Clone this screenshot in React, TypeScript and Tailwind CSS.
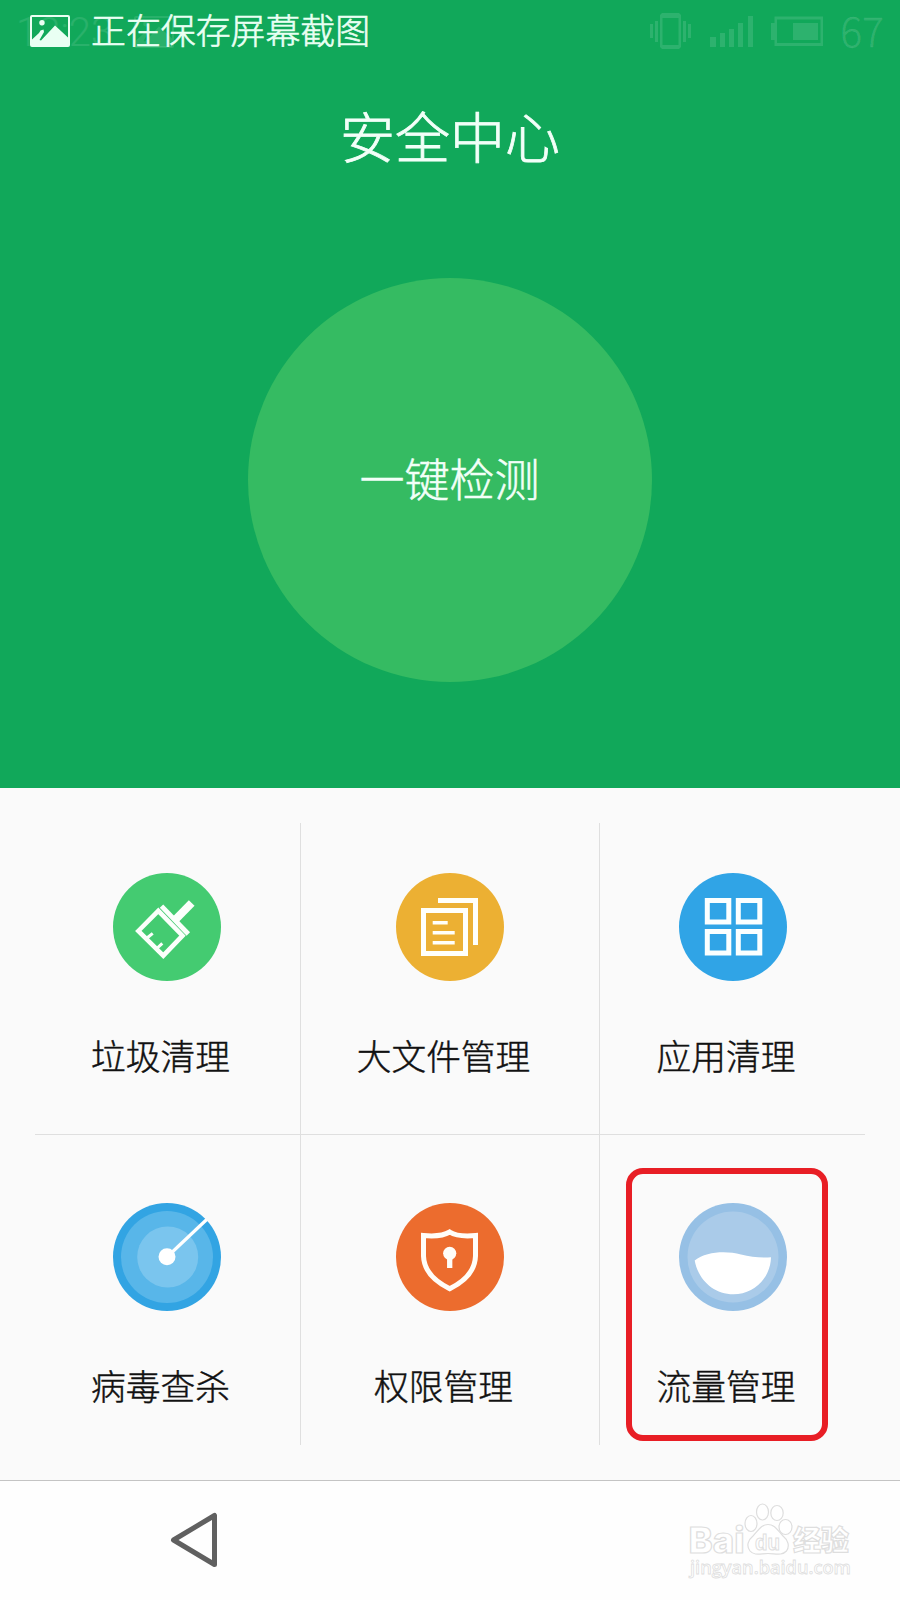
import React from 'react';

interface Tool {
  id: string;
  label: string;
  icon: React.ReactNode;
  highlighted?: boolean;
}

const BroomIcon = () => (
  <svg viewBox="0 0 108 108" className="w-[108px] h-[108px]">
    <circle cx="54" cy="54" r="54" fill="#44cb71" />
    <g fill="none" stroke="#fbfffb">
      <path d="M25.3 58 L45.3 37.8 L69.5 62.7 L50.3 82.7 Z" strokeWidth="4.6" />
      <path d="M48.5 33.2 L75.3 61" strokeWidth="4.8" />
      <path d="M62 47 L78.7 30" strokeWidth="8" />
      <path d="M34 65 L39.7 60.3 M44.3 75 L49.3 70.3" strokeWidth="3" />
    </g>
  </svg>
);

const FilesIcon = () => (
  <svg viewBox="0 0 108 108" className="w-[108px] h-[108px]">
    <circle cx="54" cy="54" r="54" fill="#ecb033" />
    <g fill="none" stroke="#fffffa">
      <rect x="27.5" y="37.5" width="42" height="43" strokeWidth="5" />
      <path d="M42 27.5 H79.5 V72" strokeWidth="5" />
      <path d="M36.7 49.7 H51.7 M36.7 59.7 H58.7 M36.7 69.7 H58.7" strokeWidth="3.4" />
    </g>
  </svg>
);

const AppsIcon = () => (
  <svg viewBox="0 0 108 108" className="w-[108px] h-[108px]">
    <circle cx="54" cy="54" r="54" fill="#30a4e6" />
    <g fill="none" stroke="#fbffff" strokeWidth="5">
      <rect x="28.3" y="27.5" width="21.5" height="21.5" />
      <rect x="59.3" y="27.5" width="21.5" height="21.5" />
      <rect x="28.3" y="58.5" width="21.5" height="21.5" />
      <rect x="59.3" y="58.5" width="21.5" height="21.5" />
    </g>
  </svg>
);

const RadarIcon = () => (
  <svg viewBox="0 0 108 108" className="w-[108px] h-[108px]">
    <circle cx="54" cy="54" r="54" fill="#32a4e3" />
    <circle cx="54" cy="54" r="46" fill="#58b6e9" />
    <circle cx="54.7" cy="54" r="30.5" fill="#7ac5ee" />
    <path d="M54 54 L93.7 16.5" stroke="#fff" strokeWidth="3.2" />
    <circle cx="54" cy="53.7" r="8.5" fill="#fff" />
  </svg>
);

const ShieldIcon = () => (
  <svg viewBox="0 0 108 108" className="w-[108px] h-[108px]">
    <circle cx="54" cy="54" r="54" fill="#ec6c2e" />
    <path
      d="M53.7 29 C47 33 38 33.5 27.5 32.5 V53 C28 69 39 78.5 53.7 85.7 C68.5 78.5 79 69 79.5 53 V32.5 C69 33.5 60 33 53.7 29 Z"
      fill="none"
      stroke="#fffdf8"
      strokeWidth="5"
    />
    <circle cx="53.7" cy="50.3" r="6.6" fill="#fffdf8" />
    <path d="M53.7 50 V65" stroke="#fffdf8" strokeWidth="5.3" />
  </svg>
);

const TrafficIcon = () => (
  <svg viewBox="0 0 108 108" className="w-[108px] h-[108px]">
    <circle cx="54" cy="54" r="54" fill="#96c0e5" />
    <circle cx="54" cy="54" r="45.5" fill="#aacbe9" />
    <path d="M15.7 57.5 C27 48.5 47 47.5 62 51.5 C72 54 82 55 92 54.3 C91.5 75 75 91.3 54.5 91.3 C34 91.3 19 76 15.7 57.5 Z" fill="#fff" />
  </svg>
);

const TOOLS: Tool[] = [
  { id: 'junk', label: '垃圾清理', icon: <BroomIcon /> },
  { id: 'files', label: '大文件管理', icon: <FilesIcon /> },
  { id: 'apps', label: '应用清理', icon: <AppsIcon /> },
  { id: 'virus', label: '病毒查杀', icon: <RadarIcon /> },
  { id: 'permissions', label: '权限管理', icon: <ShieldIcon /> },
  { id: 'traffic', label: '流量管理', icon: <TrafficIcon />, highlighted: true },
];

const PictureIcon = () => (
  <svg viewBox="0 0 40 32" className="w-10 h-8">
    <rect x="1" y="1" width="38" height="30" rx="1" fill="none" stroke="currentColor" strokeWidth="2" />
    <circle cx="12" cy="7.7" r="2.7" fill="currentColor" />
    <path d="M2 24.500 L9 18 L10.500 15.500 L13.500 14.500 L14 17 L9.500 25 L11 25.500 L25 10.500 L38 22.500 V31 H2 Z" fill="currentColor" />
  </svg>
);

const StatusBar = () => (
  <div className="relative flex h-[62px] justify-between text-[#e9fff3]">
    {/* Clock fading out behind the notification ticker */}
    <div className="absolute left-[16px] top-[9px] flex text-[40px] leading-[48px] font-light text-white/10 font-[Roboto,sans-serif]">
      12:23
      <span className="ml-[21px] mt-[7px]"><PictureIcon /></span>
    </div>
    <div className="relative flex items-start pl-[30px]">
      <span className="mt-[15px]"><PictureIcon /></span>
      <span className="ml-[21px] mt-[4px] text-[34.9px] leading-[50px] [-webkit-text-stroke:0.6px]">正在保存屏幕截图</span>
    </div>
    <div className="flex items-start pr-[16px] text-white/12">
      <svg viewBox="0 0 174 36" className="mt-[13px] w-[174px] h-[36px]" fill="currentColor">
        <path fillRule="evenodd" d="M12 0 H29 L31 2 V34 L29 36 H12 L10 34 V2 Z M12.5 5 V32 H28.5 V5 Z" />
        <path d="M5 8 H8 V29 H5 Z M0 11 H3 V25 H0 Z M33 8 H36 V29 H33 Z M38 11 H41 V25 H38 Z" />
        <path d="M60 24 H66 V34 H60 Z M70 20 H75 V34 H70 Z M79 16 H84 V34 H79 Z M88 10 H93 V34 H88 Z M98 3 H103 V34 H98 Z" />
        <path fillRule="evenodd" d="M124.500 3.500 H173 V33 H124.500 V27 H121 V10 H124.500 Z M127 6.500 V30 H170.500 V6.500 Z" />
        <path d="M143 10 H168 V27 H143 Z" />
      </svg>
      <span className="ml-[16px] mt-[4px] text-[41px] leading-[50px] font-[Noto_Sans_CJK_SC,sans-serif] [-webkit-text-stroke:0.3px]">67</span>
    </div>
  </div>
);

const ToolCell: React.FC<{ tool: Tool; index: number }> = ({ tool, index }) => (
  <div
    className={`relative flex flex-col items-center border-[#dfdfdf] ${
      index < 3 ? 'border-b pt-[50px]' : 'pt-[68px]'
    } ${index % 3 < 2 ? 'border-r' : ''} ${index % 3 === 0 ? 'pr-px' : ''}`}
  >
    {tool.icon}
    <span className="mt-[49px] mr-[13px] whitespace-nowrap text-[34.7px] leading-[50px] text-[#111] [-webkit-text-stroke:0.45px]">
      {tool.label}
    </span>
    {tool.highlighted && (
      <div className="absolute left-[26px] top-[33px] h-[273px] w-[202px] rounded-[17px] border-[6px] border-[#e81e25]" />
    )}
  </div>
);

const Watermark = () => (
  <svg viewBox="0 0 170 90" className="w-[170px] h-[90px]" fill="#fff" stroke="#dedede" strokeWidth="1.2">
    <g className="font-[Inter,sans-serif] font-extrabold">
      <text x="4.500" y="58" fontSize="36" textLength="56" lengthAdjust="spacingAndGlyphs">Bai</text>
    </g>
    <ellipse cx="67" cy="28.500" rx="6" ry="8" />
    <ellipse cx="78.500" cy="17" rx="6" ry="8" />
    <ellipse cx="93" cy="18" rx="6.200" ry="7.500" />
    <ellipse cx="101.500" cy="32" rx="6.500" ry="7.500" />
    <path d="M84 29.500 C77 29.500 74 36 69 41 C64 45 62 51 66 56 C70 61 77 58.500 84 58.500 C91 58.500 98 61 102.500 56 C106 51 104 45 99 41 C94 36 91 29.500 84 29.500 Z" />
    <g className="font-[Liberation_Sans,sans-serif] font-bold">
      <text x="71" y="54.500" fontSize="22" strokeWidth="1" textLength="25" lengthAdjust="spacingAndGlyphs">du</text>
    </g>
    <g className="font-[Noto_Sans_CJK_SC,sans-serif] font-black">
      <text x="109" y="56" fontSize="28" textLength="56" lengthAdjust="spacingAndGlyphs">经验</text>
    </g>
    <g className="font-[Open_Sans,sans-serif] font-semibold">
      <text x="6" y="79" fontSize="18" strokeWidth=".8" textLength="161" lengthAdjust="spacingAndGlyphs">jingyan.baidu.com</text>
    </g>
  </svg>
);

const App: React.FC = () => {
  return (
    <div className="flex h-[1600px] w-[900px] flex-col overflow-hidden bg-[#fafafa] font-light font-[Noto_Sans_CJK_SC,sans-serif]">
      <header className="flex h-[788px] flex-col bg-[#11a85a] text-[#f2fff8]">
        <StatusBar />
        <h1 className="mt-[32px] text-center text-[55px] leading-[80px] [-webkit-text-stroke:0.8px]">安全中心</h1>
        <button className="mx-auto mt-[104px] flex h-[404px] w-[404px] items-center justify-center rounded-full bg-[#35bb62] pb-[5px] pr-px text-[45px] leading-[64px] [-webkit-text-stroke:0.5px]">
          一键检测
        </button>
      </header>

      <main className="grid h-[692px] grid-cols-[266px_299px_265px] grid-rows-[312px_310px] px-[35px] pt-[35px]">
        {TOOLS.map((tool, index) => (
          <ToolCell key={tool.id} tool={tool} index={index} />
        ))}
      </main>

      {/* System navigation */}
      <nav className="flex flex-1 items-start justify-between border-t border-[#c4c4c4] bg-[#fefefe] pl-[170px] pr-[46px]">
        <svg viewBox="0 0 48 56" className="mt-[31px] w-[48px] h-[56px]">
          <path d="M3.500 28 L44.500 3.500 V52.500 Z" fill="none" stroke="#606060" strokeWidth="5" strokeLinejoin="round" />
        </svg>
        <div className="mt-[14px]">
          <Watermark />
        </div>
      </nav>
    </div>
  );
};

export default App;
